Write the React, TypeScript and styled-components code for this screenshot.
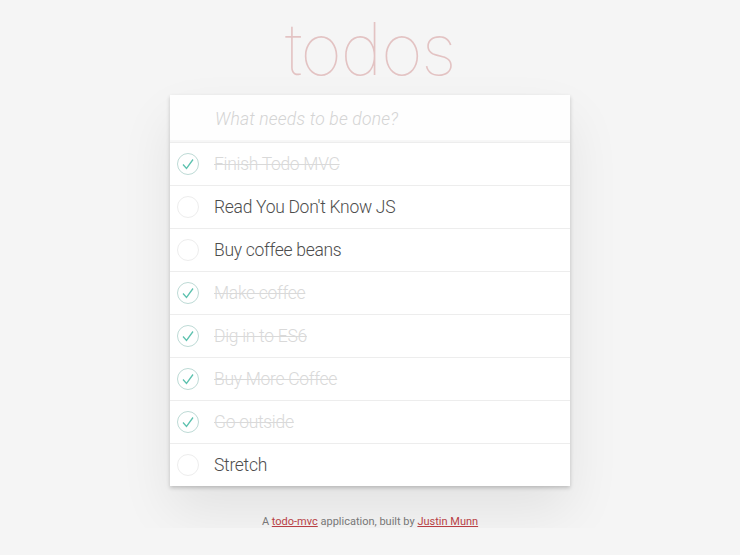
import styled, { createGlobalStyle } from "styled-components";

interface Todo {
  id: number;
  title: string;
  done: boolean;
}

const todos: Todo[] = [
  { id: 1, title: "Finish Todo MVC", done: true },
  { id: 2, title: "Read You Don't Know JS", done: false },
  { id: 3, title: "Buy coffee beans", done: false },
  { id: 4, title: "Make coffee", done: true },
  { id: 5, title: "Dig in to ES6", done: true },
  { id: 6, title: "Buy More Coffee", done: true },
  { id: 7, title: "Go outside", done: true },
  { id: 8, title: "Stretch", done: false },
];

const GlobalStyle = createGlobalStyle`
  html, body {
    margin: 0;
    padding: 0;
    min-height: 100%;
    background: #f5f5f5;
    font-family: Roboto, "Helvetica Neue", "Liberation Sans", sans-serif;
    font-weight: 300;
    color: #4d4d4d;
  }
`;

const CheckMark = () => (
  <svg width="22" height="22" viewBox="0 0 22 22">
    <circle cx="11" cy="11" r="10.5" fill="none" stroke="#bddad5" strokeWidth="1" />
    <path d="M6 11.5 L9.5 15.5 L16 6.5" fill="none" stroke="#5dc2af" strokeWidth="1.3" />
  </svg>
);

export default function App() {
  return (
    <Page>
      <GlobalStyle />
      <Title>todos</Title>
      <Card>
        <NewTodo placeholder="What needs to be done?" />
        <List>
          {todos.map((todo) => (
            <Row key={todo.id}>
              <Toggle $done={todo.done}>{todo.done ? <CheckMark /> : null}</Toggle>
              <Label $done={todo.done}>{todo.title}</Label>
            </Row>
          ))}
        </List>
      </Card>
      <Footer>
        A <a href="#">todo-mvc</a> application, built by <a href="#">Justin Munn</a>
      </Footer>
    </Page>
  );
}

const Page = styled.div`
  display: flex;
  flex-direction: column;
  align-items: center;
  padding-top: 6px;
`;

const Title = styled.h1`
  margin: 0 0 4px;
  font-family: Inter, Roboto, sans-serif;
  font-size: 72px;
  line-height: 85px;
  font-weight: 100;
  color: rgba(175, 47, 47, 0.25);
  letter-spacing: -1.5px;
`;

const Card = styled.section`
  width: 400px;
  background: #fff;
  box-shadow: 0 2px 4px rgba(0, 0, 0, 0.2), 0 25px 50px rgba(0, 0, 0, 0.08);
`;

const NewTodo = styled.input`
  display: block;
  box-sizing: border-box;
  width: 100%;
  height: 47px;
  margin: 0;
  padding: 0 16px 0 45px;
  border: none;
  outline: none;
  background: rgba(0, 0, 0, 0.003);
  box-shadow: inset 0 -2px 1px rgba(0, 0, 0, 0.03);
  font-family: inherit;
  font-weight: 300;
  font-size: 17.5px;
  letter-spacing: 0.2px;
  color: #4d4d4d;

  &::placeholder {
    font-style: italic;
    color: #d4d4d4;
  }
`;

const List = styled.ul`
  margin: 0;
  padding: 0;
  list-style: none;
`;

const Row = styled.li`
  display: flex;
  align-items: center;
  height: 42px;
  padding-left: 7px;
  border-top: 1px solid #ededed;
`;

const Toggle = styled.span<{ $done: boolean }>`
  box-sizing: border-box;
  width: 22px;
  height: 22px;
  margin-right: 15px;
  border-radius: 50%;
  border: ${(p) => (p.$done ? "none" : "1px solid #ededed")};
  display: flex;
`;

const Label = styled.span<{ $done: boolean }>`
  font-size: 17.5px;
  letter-spacing: -0.3px;
  color: ${(p) => (p.$done ? "#d9d9d9" : "#4d4d4d")};
  text-decoration: ${(p) => (p.$done ? "line-through" : "none")};
`;

const Footer = styled.footer`
  margin-top: 29px;
  font-size: 11px;
  font-weight: 400;
  color: #777;

  a {
    color: #b83f45;
  }
`;
